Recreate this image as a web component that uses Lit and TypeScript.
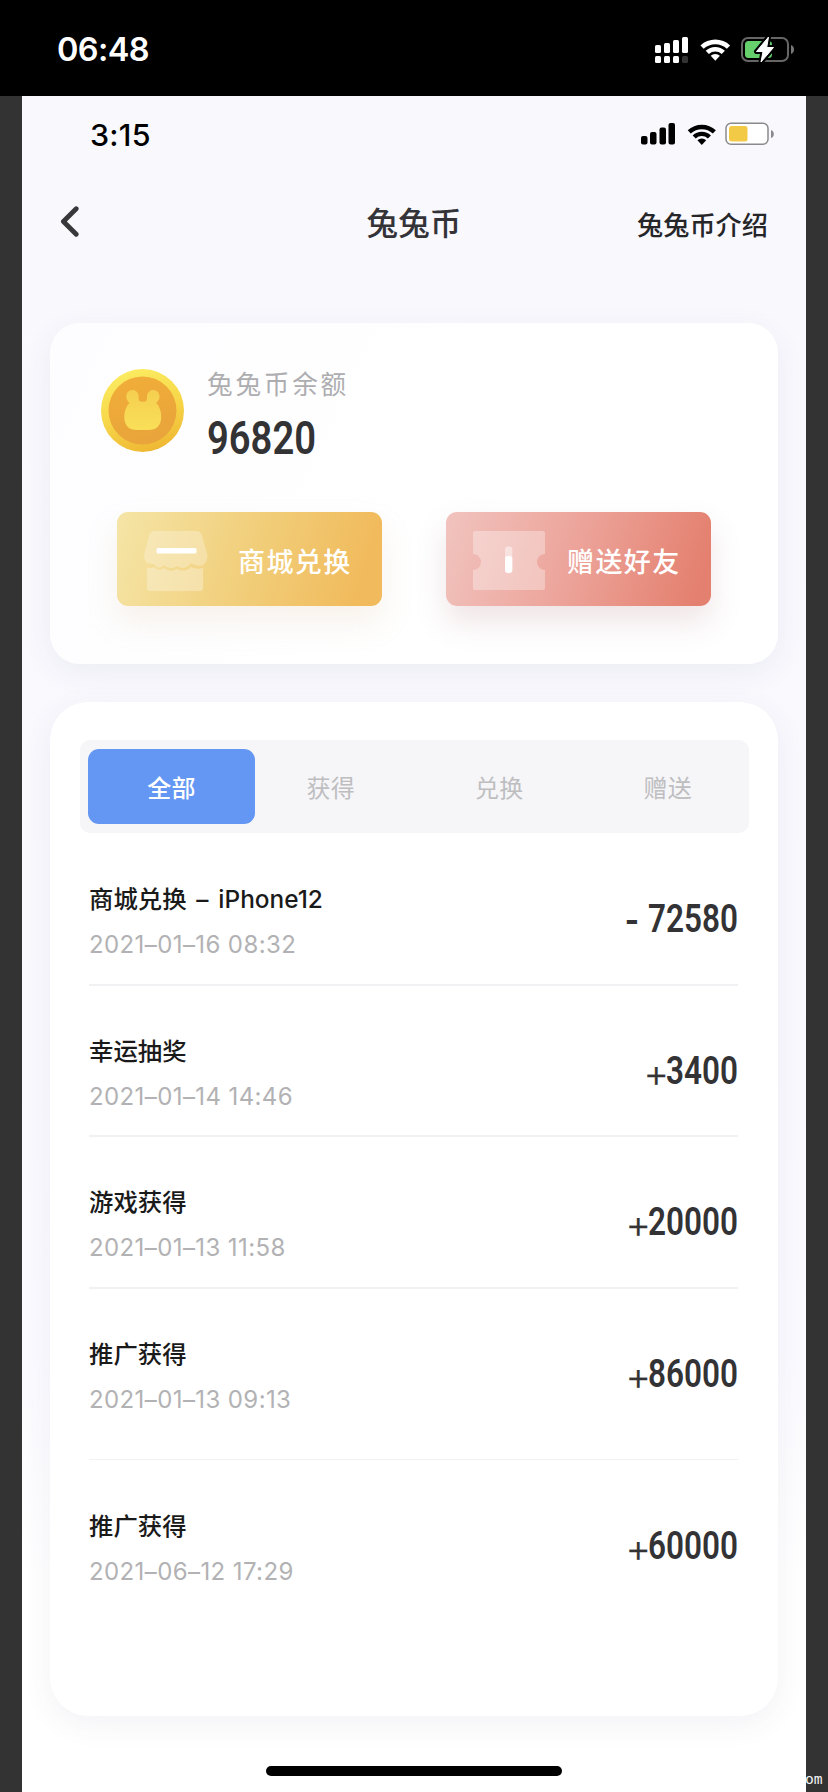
import { LitElement, html, css, svg } from "lit";
import { customElement, property, state } from "lit/decorators.js";
import { classMap } from "lit/directives/class-map.js";

interface Entry {
  title: string;
  time: string;
  sign: "+" | "-";
  amount: string;
}

const ENTRIES: Entry[] = [
  { title: "商城兑换 – iPhone12", time: "2021–01–16 08:32", sign: "-", amount: "72580" },
  { title: "幸运抽奖", time: "2021–01–14 14:46", sign: "+", amount: "3400" },
  { title: "游戏获得", time: "2021–01–13 11:58", sign: "+", amount: "20000" },
  { title: "推广获得", time: "2021–01–13 09:13", sign: "+", amount: "86000" },
  { title: "推广获得", time: "2021–06–12 17:29", sign: "+", amount: "60000" },
];

const TABS = ["全部", "获得", "兑换", "赠送"];

const wifi = svg`
  <path d="M1.2 8.6 A21.5 21.5 0 0 1 30.8 8.6 L27.6 11.9 A17 17 0 0 0 4.4 11.9 Z"/>
  <path d="M6.4 13.9 A14 14 0 0 1 25.6 13.9 L22.4 17.1 A9.6 9.6 0 0 0 9.6 17.1 Z"/>
  <path d="M11.4 19 A6.8 6.8 0 0 1 20.6 19 L16 24 Z"/>`;

/* Condensed numerals: text squeezed to a fixed advance per digit. */
@customElement("coin-number")
class CoinNumber extends LitElement {
  @property() value = "";
  @property({ type: Number }) size = 38;
  @property({ type: Number }) advance = 18;
  static styles = css`
    :host { display: block; }
    svg { display: block; overflow: visible; }
    text { font-family: Roboto, sans-serif; font-weight: 600; fill: #333335; }
  `;
  render() {
    const w = this.value.length * this.advance;
    const h = this.size * 0.711;
    return html`<svg width=${w} height=${h}>
      <text x="0" y=${h} font-size=${this.size} textLength=${w} lengthAdjust="spacingAndGlyphs">${this.value}</text>
    </svg>`;
  }
}

@customElement("record-row")
class RecordRow extends LitElement {
  @property({ attribute: false }) entry!: Entry;
  static styles = css`
    :host { display: flex; justify-content: space-between; align-items: flex-start; }
    .title {
      font: 500 24.4px/36px Inter, "Noto Sans CJK SC", sans-serif;
      color: #1a1a1a; white-space: pre; word-spacing: 3.3px;
    }
    .time { font: 400 24px/30px Inter, sans-serif; color: #b2b2b4; margin-top: 13px; white-space: pre; letter-spacing: 0.4px; }
    .amount { display: flex; align-items: flex-end; padding-top: 24px; }
    .sign { font: 300 39px/19px Inter, sans-serif; color: #333335; height: 21px; margin-right: -3px; -webkit-text-stroke: 0.3px #333335; }
    .minus { font: 600 38px/22px Roboto, sans-serif; color: #333335; height: 22px; margin-right: 9px; }
  `;
  render() {
    const e = this.entry;
    return html`
      <div><div class="title">${e.title}</div><div class="time">${e.time}</div></div>
      <div class="amount">
        <span class=${e.sign === "+" ? "sign" : "minus"}>${e.sign}</span>
        <coin-number .value=${e.amount} .size=${38} .advance=${18}></coin-number>
      </div>`;
  }
}

@customElement("app-root")
class AppRoot extends LitElement {
  @state() private active = 0;

  static styles = css`
    * { box-sizing: border-box; }
    :host {
      display: flex; flex-direction: column; width: 828px; height: 1792px; overflow: hidden;
      background: #333; position: relative;
      font-family: Inter, "Noto Sans CJK SC", sans-serif;
    }
    svg { display: block; }
    .outer {
      flex: none; height: 96px; background: #000; color: #fff;
      display: flex; justify-content: space-between; padding: 0 34px 0 57px;
    }
    .clock { font-size: 32.5px; font-weight: 600; line-height: 40px; padding-top: 30px; letter-spacing: -0.6px; }
    .outer .icons { margin-top: 36px; }
    .phone {
      flex: 1; margin: 0 22px; display: flex; flex-direction: column;
      background: linear-gradient(#f8f8fd 0, #f9f9fe 1000px, #fafaff 1250px, #fff 1480px);
    }
    .inner { display: flex; justify-content: space-between; padding: 19px 32px 0 68px; height: 78px; }
    .inner .clock { font-size: 30.5px; font-weight: 500; color: #000; line-height: 40px; padding-top: 0; letter-spacing: 0.2px; }
    .inner .icons { margin-top: 6px; }
    .nav {
      display: grid; grid-template-columns: 1fr auto 1fr; align-items: start;
      padding: 28px 38px 0; height: 149px;
    }
    .back { margin: 4px 0 0; }
    .heading { font: 500 31.6px/44px "Noto Sans CJK SC", sans-serif; color: #333338; margin-top: -3px; }
    .intro { font: 500 26.2px/40px "Noto Sans CJK SC", sans-serif; color: #262629; justify-self: end; margin-top: 2px; }
    .card { background: #fff; margin: 0 28px; box-shadow: 0 8px 30px rgba(70, 70, 110, 0.07); }
    .balance { height: 341px; border-radius: 30px; background: linear-gradient(115deg, #fdfdff, #fff 60%); }
    .summary { display: flex; padding: 46px 0 0 51px; height: 189px; }
    .figures { margin-left: 22px; }
    .label { font: 400 25.6px/30px "Noto Sans CJK SC", sans-serif; letter-spacing: 2.8px; color: #adadb0; margin: -1px 0 23.5px; }
    .buttons { display: flex; gap: 64px; padding-left: 67px; }
    .btn {
      width: 265px; height: 94px; border-radius: 11px; display: flex; align-items: center;
      font: 500 27px/40px "Noto Sans CJK SC", sans-serif; letter-spacing: 1.4px; color: #fff;
    }
    .btn span { margin-top: 3px; }
    .mall { background: linear-gradient(107deg, #f5e4a5 2%, #f1ce7a 50%, #f1bb5d 90%); box-shadow: 0 16px 30px rgba(215, 180, 130, 0.17); }
    .gift { background: linear-gradient(107deg, #f1c2bd 2%, #eca298 50%, #e4806f 94%); box-shadow: 0 16px 30px rgba(170, 110, 120, 0.19); }
    .history { margin-top: 38px; height: 1014px; border-radius: 38px; padding: 38px 29px 0 30px; }
    .tabs { display: grid; grid-template-columns: 158.5px repeat(3, 168.5px); height: 93px; border-radius: 10px; background: #f6f6f9; padding: 9px 0 9px 8px; margin-bottom: 48px; }
    .tab { font: 400 24px/72px "Noto Sans CJK SC", sans-serif; text-align: center; color: #bebec1; border-radius: 11px; letter-spacing: 0.3px; cursor: pointer; height: 75px; padding-top: 2px; }
    .tab.on { background: #6497f3; color: #fff; font-weight: 500; width: 167px; }
    .rows { padding: 0 11px 0 9px; }
    .row { height: 151.5px; }
    .row::before { content: ""; display: block; height: 2px; background: #f1f1f3; margin-bottom: 47px; }
    .row:first-child::before { display: none; }
    .row:first-child { height: 103px; }
    .row:nth-child(2) { height: 151px; }
    .row:nth-child(4) { height: 172.5px; }
    .row:last-child::before { height: 1px; margin-bottom: 48px; }
    .home { width: 296px; height: 10px; border-radius: 5px; background: #000; margin: 50px auto 0; }
    .mark { position: absolute; left: 805px; top: 1770px; font: 14.6px/18px "DejaVu Sans Mono", monospace; color: #f5f5f5; }
  `;

  render() {
    return html`
      <div class="outer">
        <div class="clock">06:48</div>
        <svg class="icons" width="140" height="28" viewBox="0 0 140 28" fill="#fff">
          <rect x="1" y="9" width="6" height="8" rx="1.5"/><rect x="10" y="7" width="6" height="10" rx="1.5"/>
          <rect x="19" y="4" width="6" height="13" rx="1.5"/><rect x="28" y="1" width="6" height="16" rx="1.5"/>
          <rect x="1" y="20" width="6" height="7" rx="1.5"/><rect x="10" y="20" width="6" height="7" rx="1.5"/>
          <rect x="19" y="20" width="6" height="7" rx="1.5"/><rect x="28" y="20" width="6" height="7" rx="1.5" fill="#333"/>
          <g transform="translate(45.3 .8)">${wifi}</g>
          <rect x="88" y="2" width="46" height="23" rx="6" fill="none" stroke="#666" stroke-width="2"/>
          <path d="M137 9 q3 1.3 3 4.500 q0 3.200 -3 4.500z" fill="#777"/>
          <rect x="91" y="5" width="27" height="17" rx="3.500" fill="#65d06c"/>
          <path d="M114.500 1 L102.500 15.500 H109 L107 26 L119.500 11.500 H112.700 Z" stroke="#000" stroke-width="5" stroke-linejoin="round"/>
          <path d="M114.500 1 L102.500 15.500 H109 L107 26 L119.500 11.500 H112.700 Z" stroke="#fff" stroke-width="1" stroke-linejoin="round"/>
        </svg>
      </div>
      <div class="phone">
        <div class="inner">
          <div class="clock">3:15</div>
          <svg class="icons" width="134" height="26" viewBox="0 0 134 26">
            <rect x="1" y="15" width="6.500" height="8.500" rx="2"/><rect x="10" y="11" width="6.500" height="12.500" rx="2"/>
            <rect x="19.500" y="6.500" width="6.500" height="17" rx="2"/><rect x="28.500" y="2" width="6.500" height="21.500" rx="2"/>
            <g transform="translate(46.600 1.200) scale(.95)">${wifi}</g>
            <rect x="86" y="2.300" width="42" height="21" rx="5" fill="#fff" stroke="#8a8a8c" stroke-width="1.500"/>
            <path d="M131 9 q2.800 1 2.800 4 q0 3 -2.800 4z" fill="#8a8a8c"/>
            <rect x="89" y="5" width="18.500" height="15.500" rx="2.500" fill="#f3ca45"/>
          </svg>
        </div>
        <div class="nav">
          <svg class="back" width="20" height="32" viewBox="0 0 20 32" fill="none" stroke="#38383b" stroke-width="4.800" stroke-linecap="round" stroke-linejoin="round"><path d="M16.200 2.800 L3.400 15.500 L16.200 28.300"/></svg>
          <div class="heading">兔兔币</div>
          <div class="intro">兔兔币介绍</div>
        </div>

        <section class="card balance">
          <div class="summary">
            <svg width="84" height="84" viewBox="0 0 84 84">
              <defs>
                <linearGradient id="rim" x1=".3" y1="0" x2=".6" y2="1"><stop offset="0" stop-color="#fbec61"/><stop offset=".5" stop-color="#f7d84a"/><stop offset="1" stop-color="#efb733"/></linearGradient>
                <linearGradient id="face" x1="0" y1="0" x2=".3" y2="1"><stop offset="0" stop-color="#f2ae38"/><stop offset="1" stop-color="#e9a43b"/></linearGradient>
                <linearGradient id="pet" x1="0" y1="0" x2="0" y2="1"><stop offset="0" stop-color="#f5cf50"/><stop offset="1" stop-color="#f9df58"/></linearGradient>
              </defs>
              <circle cx="41.500" cy="41.500" r="41.500" fill="url(#rim)"/>
              <circle cx="41.500" cy="41.500" r="34" fill="url(#face)"/>
              <path fill="url(#pet)" d="M41.800 32.500 C40 33 38 32.500 37.600 30 C38.400 24.500 35.500 21 31.800 21 C27.500 21 25.300 24.300 25.300 27.500 C25.300 30.500 26.800 32.600 28.500 33.800 C25 37.500 23.300 42 23.300 48 C23.300 56.500 28 61 36 61 H47.500 C55.500 61 60.200 56.500 60.200 48 C60.200 42 58.500 37.500 55.200 33.800 C57 32.600 58.500 30.500 58.500 27.500 C58.500 24.300 56.200 21 52 21 C48.200 21 45.300 24.500 46 30 C45.600 32.500 43.600 33 41.800 32.500Z"/>
            </svg>
            <div class="figures">
              <div class="label">兔兔币余额</div>
              <coin-number .value=${"96820"} .size=${45.5} .advance=${21.8}></coin-number>
            </div>
          </div>
          <div class="buttons">
            <div class="btn mall">
              <svg width="121" height="94" viewBox="0 0 121 94" fill="#fff">
                <path fill-opacity=".27" d="M37 19 H80 Q83 19 84.500 22 L90.500 43 Q91 52 83 54 Q77 53 74 51 Q68 59 60 54 Q53 59 47 53 Q42 59 37 52 Q27 53 27 43 L32.500 22 Q34 19 37 19Z"/>
                <path fill-opacity=".3" d="M30 56 Q33 57 37 55 Q42 60 47 56 Q53 61 60 57 Q68 61 74 55 Q79 58 86 56 V76 Q86 79 83 79 H33 Q30 79 30 76Z"/>
                <rect x="39.500" y="36" width="40" height="5.500" rx="1.500"/>
              </svg>
              <span>商城兑换</span>
            </div>
            <div class="btn gift">
              <svg width="121" height="94" viewBox="0 0 121 94" fill="#fff">
                <path fill-opacity=".33" d="M29 19 H97 Q99 19 99 21 V42 A8 8 0 0 0 99 58 V76 Q99 78 97 78 H29 Q27 78 27 76 V58 A8 8 0 0 0 27 42 V21 Q27 19 29 19Z"/>
                <rect x="59" y="34.500" width="7.300" height="26" rx="3" fill-opacity=".45"/>
                <rect x="59" y="44" width="7.300" height="17" rx="3"/>
              </svg>
              <span>赠送好友</span>
            </div>
          </div>
        </section>

        <section class="card history">
          <div class="tabs">
            ${TABS.map((t, i) => html`<div class=${classMap({ tab: true, on: i === this.active })} @click=${() => (this.active = i)}>${t}</div>`)}
          </div>
          <div class="rows">
            ${ENTRIES.map((e) => html`<div class="row"><record-row .entry=${e}></record-row></div>`)}
          </div>
        </section>
        <div class="home"></div>
      </div>
      <div class="mark">om</div>
    `;
  }
}
